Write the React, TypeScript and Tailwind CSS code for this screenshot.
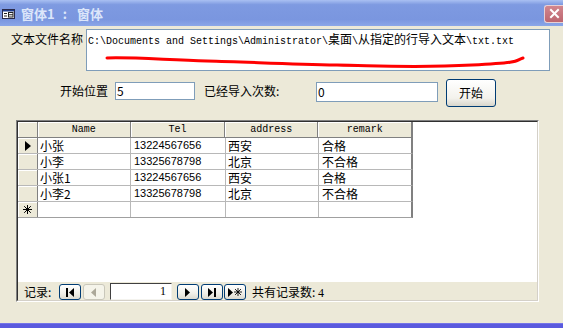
import React from "react"

const cjk = "font-['Noto_Sans_CJK_SC',sans-serif]"
const mono = "font-['Liberation_Mono','Noto_Sans_CJK_SC',monospace]"

const path: [string, boolean][] = [
  ["C:\\Documents and Settings\\Administrator\\", false],
  ["桌面", true],
  ["\\", false],
  ["从指定的行导入文本", true],
  ["\\txt.txt", false],
]

const rows = [
  { name: "小张", tel: "13224567656", address: "西安", remark: "合格" },
  { name: "小李", tel: "13325678798", address: "北京", remark: "不合格" },
  { name: "小张1", tel: "13224567656", address: "西安", remark: "合格" },
  { name: "小李2", tel: "13325678798", address: "北京", remark: "不合格" },
]

function Star({ size = 9, color = "#000" }: { size?: number; color?: string }) {
  return (
    <svg width={size} height={size} viewBox="0 0 9 9">
      <g stroke={color} strokeWidth="1">
        <line x1="4.5" y1="0" x2="4.5" y2="9" />
        <line x1="0" y1="4.5" x2="9" y2="4.5" />
        <line x1="1.2" y1="1.2" x2="7.8" y2="7.8" />
        <line x1="7.8" y1="1.2" x2="1.2" y2="7.8" />
      </g>
    </svg>
  )
}

function TitleBar() {
  return (
    <div className="h-[26px] shrink-0 flex items-center bg-[linear-gradient(to_bottom,#a9c0f2_0%,#7e9ae1_18%,#7a96df_75%,#8aa6e8_100%)]">
      <svg width="13" height="10" viewBox="0 0 13 10" className="ml-[2px] mt-[2px]">
        <rect x="0.5" y="0.5" width="12" height="9" fill="#fff" stroke="#2a2a4a" />
        <rect x="1" y="1" width="11" height="1.5" fill="#1e3c8c" />
        <g stroke="#222" strokeWidth="1">
          <line x1="2" y1="4.5" x2="5" y2="4.5" />
          <line x1="2" y1="7" x2="5" y2="7" />
          <rect x="6.5" y="3.5" width="4.5" height="4.5" fill="none" />
          <line x1="6.5" y1="5.75" x2="11" y2="5.75" />
        </g>
      </svg>
      <div className={`${cjk} ml-[6px] flex items-center text-[13px] font-bold text-[#dce6fa] leading-none`}>
        <span>窗体1</span>
        <span className="ml-[8px]">:</span>
        <span className="ml-[10px]">窗体</span>
      </div>
      <div className="ml-auto mt-[1px] w-[19px] h-[18px] rounded-l-[3px] border border-r-0 border-[#e8d0d4] bg-[linear-gradient(to_bottom,#d2868e,#bd6670)] flex items-center justify-center">
        <svg width="11" height="11" viewBox="0 0 11 11">
          <g stroke="#fff" strokeWidth="2" strokeLinecap="square">
            <line x1="2" y1="2" x2="9" y2="9" />
            <line x1="9" y1="2" x2="2" y2="9" />
          </g>
        </svg>
      </div>
    </div>
  )
}

function NavBtn({ disabled, children }: { disabled?: boolean; children: React.ReactNode }) {
  return (
    <div
      className={`w-[22px] h-[16px] mt-[2px] rounded-[3px] border flex items-center justify-center ${
        disabled
          ? "border-[#c9c7ba] bg-[#f5f4ea]"
          : "border-[#003c74] bg-[linear-gradient(to_bottom,#ffffff,#f0efe8_60%,#dcdad0)]"
      }`}
    >
      {children}
    </div>
  )
}

function Cell({ w, className = "", children }: { w: string; className?: string; children?: React.ReactNode }) {
  return <div className={`${w} h-full shrink-0 border-r border-[#b8b8b8] pl-[2px] whitespace-nowrap ${className}`}>{children}</div>
}

export default function App() {
  return (
    <div className={`${cjk} w-[563px] h-[328px] overflow-hidden flex flex-col bg-[#ece9d8] text-black text-[12px]`}>
      <TitleBar />

      <div className="flex-1 flex flex-col">
        <div className="flex items-start mt-[3px]">
          <span className="ml-[11px] mt-[3px] leading-[14px] w-[72px]">文本文件名称</span>
          <div className="relative ml-[3px] w-[464px] h-[42px] bg-white border border-[#7f9db9] pl-[1px] pt-[2px] leading-[14px] whitespace-nowrap">
            {path.map(([t, isCjk], i) =>
              isCjk ? (
                <span key={i} className="text-[12px]">{t}</span>
              ) : (
                <span key={i} className={`${mono} text-[10px]`}>{t}</span>
              )
            )}
            <svg className="absolute left-0 top-0" width="464" height="42" viewBox="0 0 464 42">
              <path
                d="M20 28 C 45 27, 80 30, 120 31 S 200 34, 250 35 S 330 38, 385 35 S 426 31, 436 28"
                fill="none"
                stroke="#ff0000"
                strokeWidth="3"
                strokeLinecap="round"
              />
            </svg>
          </div>
        </div>

        <div className="flex items-start mt-[8px] h-[28px]">
          <span className="ml-[60px] mt-[5px] w-[48px] leading-[14px]">开始位置</span>
          <div className="ml-[7px] mt-[3px] w-[80px] h-[18px] bg-white border border-[#7f9db9] pl-[1px] leading-[16px]">5</div>
          <span className="ml-[9px] mt-[5px] w-[112px] leading-[14px]">已经导入次数:</span>
          <div className="mt-[3px] w-[122px] h-[20px] bg-white border border-[#7f9db9] pl-[1px] leading-[18px]">0</div>
          <button className="ml-[8px] w-[50px] h-[28px] rounded-[3px] border border-[#003c74] bg-[linear-gradient(to_bottom,#ffffff,#f3f2ec_70%,#d8d6cc)] text-[12px] leading-none">
            开始
          </button>
        </div>

        <div className="ml-[16px] mt-[13px] w-[523px] h-[182px] border border-l-[#808080] border-t-[#808080] border-r-white border-b-white">
          <div className="w-full h-full border border-l-[#303030] border-t-[#303030] border-r-[#d4d0c8] border-b-[#d4d0c8] flex flex-col">
            <div className="flex-1 bg-white">
              <div className="flex h-[16px] bg-[#ece9d8] border-b border-[#808080] w-[395px] border-r-2 border-r-[#808080]">
                <div className="w-[20px] h-full border-r border-[#808080] shadow-[inset_1px_1px_0_#fff]" />
                {[
                  ["Name", "w-[93px]"],
                  ["Tel", "w-[95px]"],
                  ["address", "w-[93px]"],
                  ["remark", "w-[93px]"],
                ].map(([h, w], i) => (
                  <div
                    key={h}
                    className={`${w} h-full ${i < 3 ? "border-r border-[#808080]" : ""} shadow-[inset_1px_1px_0_#fff] ${mono} text-[10px] leading-[15px] text-center`}
                  >
                    {h}
                  </div>
                ))}
              </div>
              {rows.map((r, i) => (
                <div key={i} className="flex h-[16px] w-[395px] border-b border-[#b8b8b8] border-r-2 border-r-[#808080] leading-[15px]">
                  <div className="w-[20px] h-full shrink-0 bg-[#ece9d8] border-r border-[#808080] shadow-[inset_1px_1px_0_#fff] flex items-center justify-center">
                    {i === 0 && (
                      <svg width="6" height="10" viewBox="0 0 6 10">
                        <path d="M0 0 L6 5 L0 10 Z" fill="#000" />
                      </svg>
                    )}
                  </div>
                  <Cell w="w-[93px]">{r.name}</Cell>
                  <Cell w="w-[95px]" className="font-['Liberation_Sans',sans-serif] text-[11px] pl-[3px]">{r.tel}</Cell>
                  <Cell w="w-[93px]">{r.address}</Cell>
                  <Cell w="w-[93px]" className="border-r-0 pl-[3px]">{r.remark}</Cell>
                </div>
              ))}
              <div className="flex h-[16px] w-[395px] border-b border-[#a0a0a0] border-r-2 border-r-[#808080]">
                <div className="w-[20px] h-full shrink-0 bg-[#ece9d8] border-r border-[#808080] shadow-[inset_1px_1px_0_#fff] flex items-center justify-center">
                  <Star />
                </div>
                <Cell w="w-[93px]" />
                <Cell w="w-[95px]" />
                <Cell w="w-[93px]" />
                <Cell w="w-[93px]" className="border-r-0" />
              </div>
            </div>

            <div className="h-[18px] shrink-0 flex items-start">
              <span className="ml-[6px] mt-[3px] w-[30px] leading-[14px]">记录:</span>
              <div className="ml-[5px]">
                <NavBtn>
                  <svg width="10" height="9" viewBox="0 0 10 9">
                    <rect x="1" y="0" width="2" height="9" fill="#000" />
                    <path d="M9 0 L4 4.5 L9 9 Z" fill="#000" />
                  </svg>
                </NavBtn>
              </div>
              <div className="ml-[2px]">
                <NavBtn disabled>
                  <svg width="6" height="9" viewBox="0 0 6 9">
                    <path d="M5 0 L0 4.5 L5 9 Z" fill="#aca899" />
                  </svg>
                </NavBtn>
              </div>
              <div className="ml-[5px] mt-[1px] w-[62px] h-[17px] bg-white border border-l-[#404040] border-t-[#404040] border-r-[#f4f3ee] border-b-[#f4f3ee] pr-[5px] text-right leading-[15px] font-['Liberation_Serif',serif]">
                1
              </div>
              <div className="ml-[5px]">
                <NavBtn>
                  <svg width="6" height="9" viewBox="0 0 6 9">
                    <path d="M0 0 L5 4.5 L0 9 Z" fill="#000" />
                  </svg>
                </NavBtn>
              </div>
              <div className="ml-[2px]">
                <NavBtn>
                  <svg width="10" height="9" viewBox="0 0 10 9">
                    <path d="M1 0 L6 4.5 L1 9 Z" fill="#000" />
                    <rect x="7" y="0" width="2" height="9" fill="#000" />
                  </svg>
                </NavBtn>
              </div>
              <div className="ml-[1px]">
                <NavBtn>
                  <div className="flex items-center gap-[1px]">
                    <svg width="5" height="9" viewBox="0 0 5 9">
                      <path d="M0 0 L5 4.5 L0 9 Z" fill="#000" />
                    </svg>
                    <Star size={8} />
                  </div>
                </NavBtn>
              </div>
              <span className="ml-[6px] mt-[3px] leading-[14px] whitespace-nowrap">
                共有记录数: <span className="font-['Liberation_Serif',serif]">4</span>
              </span>
            </div>
          </div>
        </div>
      </div>

      <div className="h-[5px] shrink-0 bg-[#5a5ade] border-t border-[#7474e8]" />
    </div>
  )
}
